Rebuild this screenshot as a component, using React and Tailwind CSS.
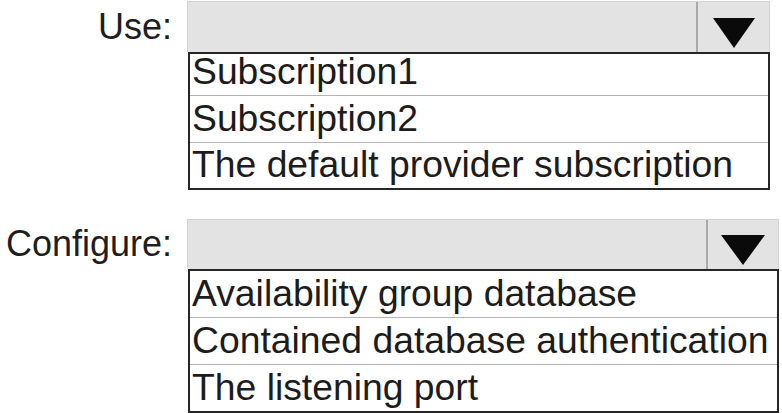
import React from "react";

function Triangle({ className }) {
  return (
    <svg className={className} viewBox="0 0 44 30" preserveAspectRatio="none">
      <polygon points="0,0 44,0 22,30" fill="#0a0a0a" />
    </svg>
  );
}

function Row({ text, first, h }) {
  return (
    <div
      className={
        "flex items-end pl-[2px] pb-[5px] text-[37.3px] leading-[38px] text-[#1c1c1c] whitespace-nowrap " +
        h +
        (first ? "" : " border-t border-[#b4b4b4]")
      }
    >
      {text}
    </div>
  );
}

function Block({ label, boxW, cellCls, barH, rows, triCls, className = "" }) {
  return (
    <div className={"flex " + className}>
      <div className={"w-[172px] shrink-0 text-right text-[36px] text-[#1e1e1e] " + barH}>
        {label}
      </div>
      <div className={"ml-[15px] flex flex-col " + boxW}>
        <div className={"flex bg-[#e3e3e3] border-t border-l border-r border-[#d2d2d2] " + barH}>
          <div className="flex-1" />
          <div className={"h-full border-l-2 border-[#a9a9a9] flex justify-center " + cellCls}>
            <Triangle className={triCls} />
          </div>
        </div>
        <div className="ml-px flex flex-col border-2 border-[#262626] bg-white">
          {rows.map((r, i) => (
            <Row key={r.t} text={r.t} h={r.h} first={i === 0} />
          ))}
        </div>
      </div>
    </div>
  );
}

export default function App() {
  return (
    <div className="w-[782px] h-[413px] bg-white overflow-hidden flex flex-col pt-px font-['Liberation_Sans',Arial,sans-serif]">
      <Block
        label="Use:"
        boxW="w-[583px]"
        barH="h-[51px] leading-[51px]"
        cellCls="w-[73px] pt-[16px]"
        triCls="w-[42px] h-[30px]"
        rows={[
          { t: "Subscription1", h: "h-[41px]" },
          { t: "Subscription2", h: "h-[47px]" },
          { t: "The default provider subscription", h: "h-[46px]" },
        ]}
      />
      <Block
        className="mt-[29px]"
        label="Configure:"
        boxW="w-[592px]"
        barH="h-[50px] leading-[50px]"
        cellCls="w-[72px] pt-[15px]"
        triCls="w-[44px] h-[30px]"
        rows={[
          { t: "Availability group database", h: "h-[46px]" },
          { t: "Contained database authentication", h: "h-[47px]" },
          { t: "The listening port", h: "h-[47px]" },
        ]}
      />
    </div>
  );
}
